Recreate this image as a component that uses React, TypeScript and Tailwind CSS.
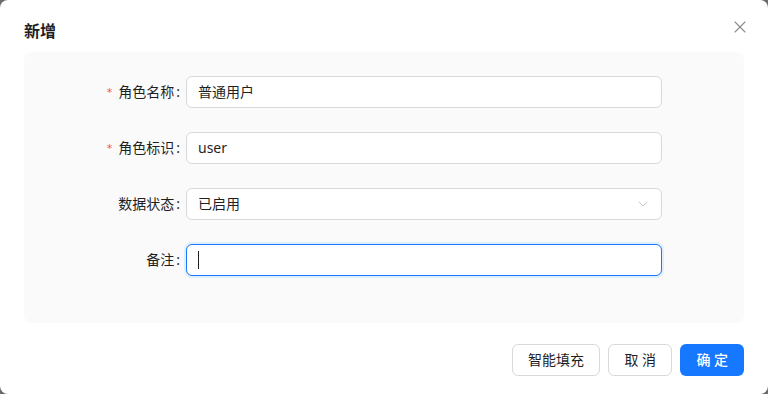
import { X, ChevronDown } from 'lucide-react';

const FONT = { fontFamily: '"Noto Sans", "Noto Sans CJK SC", sans-serif' };

function Row({ label, required, children }: { label: string; required?: boolean; children: React.ReactNode }) {
  return (
    <div className="flex items-center h-8">
      <div className="w-[162px] flex justify-end items-center text-sm text-[#1f1f1f]">
        {required && <span className="text-[#ff4d4f] mr-[6px] text-[11px] leading-none" style={{ fontFamily: '"DejaVu Sans", sans-serif' }}>*</span>}
        <span>{label}</span>
        <span className="ml-[2px] mr-[6px]">:</span>
      </div>
      {children}
    </div>
  );
}

export default function App() {
  return (
    <div className="w-[768px] h-[394px] bg-[#6b6b6b]" style={FONT}>
      <div className="w-full h-full bg-white rounded-lg flex flex-col px-6">
        <div className="flex items-center justify-between h-[52px] pt-[10px]">
          <h2 className="text-base font-semibold text-[#1f1f1f]">新增</h2>
          <X size={20} strokeWidth={1.3} className="text-[#8c8c8c] mr-[-6px] mb-[8px]" />
        </div>
        <div className="bg-[#fafafa] rounded-lg h-[271px] pt-6 flex flex-col gap-6">
          <Row label="角色名称" required>
            <div className="w-[476px] h-8 border border-[#d9d9d9] rounded-md bg-white px-[11px] flex items-center text-sm text-[#1f1f1f]">普通用户</div>
          </Row>
          <Row label="角色标识" required>
            <div className="w-[476px] h-8 border border-[#d9d9d9] rounded-md bg-white px-[11px] flex items-center text-sm text-[#1f1f1f]">user</div>
          </Row>
          <Row label="数据状态">
            <div className="w-[476px] h-8 border border-[#d9d9d9] rounded-md bg-white pl-[11px] pr-[10px] flex items-center justify-between text-sm text-[#1f1f1f]">
              <span>已启用</span>
              <ChevronDown size={16} strokeWidth={1.3} className="text-[#bfbfbf]" />
            </div>
          </Row>
          <Row label="备注">
            <div className="w-[476px] h-8 border border-[#1677ff] rounded-md bg-white px-[11px] flex items-center shadow-[0_0_0_2px_rgba(5,145,255,0.1)]">
              <span className="w-px h-[18px] bg-[#1f1f1f]" />
            </div>
          </Row>
        </div>
        <div className="flex justify-end items-center gap-2 mt-[21px]">
          <button className="h-8 px-[15px] border border-[#d9d9d9] rounded-md bg-white text-sm text-[#1f1f1f]">智能填充</button>
          <button className="h-8 w-16 border border-[#d9d9d9] rounded-md bg-white text-sm text-[#1f1f1f] tracking-[0.25em] pl-1">取消</button>
          <button className="h-8 w-16 rounded-md bg-[#1677ff] text-sm text-white font-medium tracking-[0.25em] pl-1">确定</button>
        </div>
      </div>
    </div>
  );
}
